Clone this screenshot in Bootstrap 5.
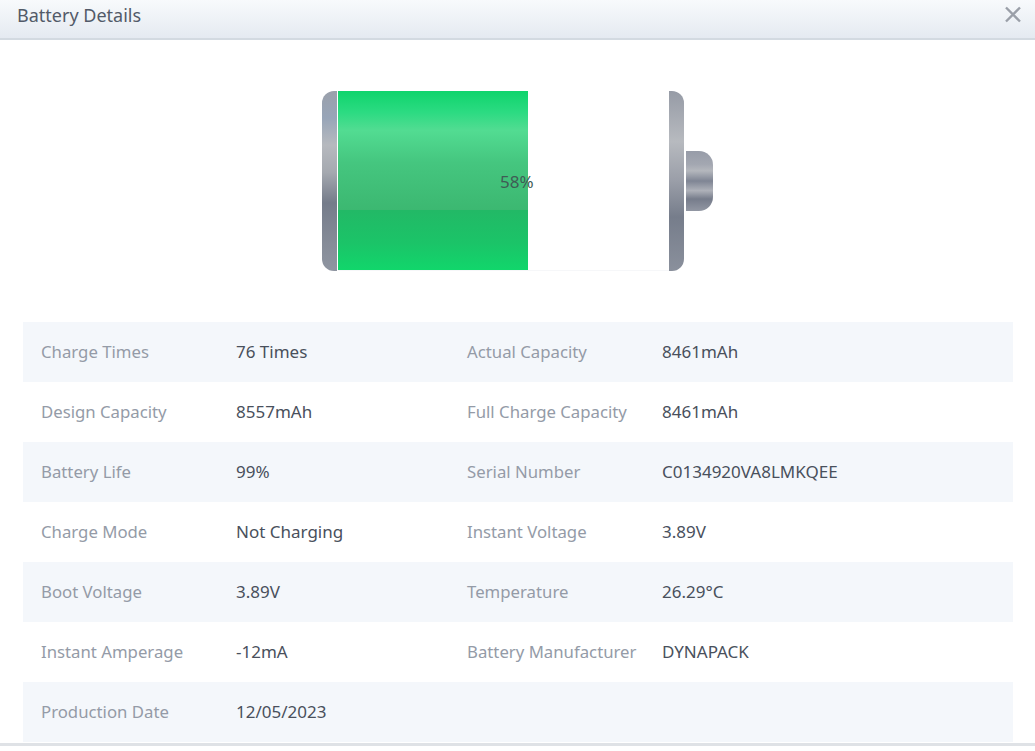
<!DOCTYPE html>
<html lang="en">
<head>
<meta charset="utf-8">
<title>Battery Details</title>
<link href="https://cdn.jsdelivr.net/npm/bootstrap@5.3.0/dist/css/bootstrap.min.css" rel="stylesheet">
<style>
html,body{height:751px;overflow:hidden;background:#fff}
body{font-family:"Noto Sans","Open Sans",sans-serif;font-size:17px;color:#4a5260}
.dlg-head{height:40px;padding:0 13px 8px 17px;background:linear-gradient(180deg,#f8fafc 0%,#e5eaf1 100%);border-bottom:2px solid #d3dae1}
.dlg-title{font-size:18px;color:#525a68;line-height:31px;margin:0;font-weight:400}
.dlg-x{width:18px;height:18px;display:block}
.batt-wrap{height:282px;padding-top:51px}
.batt{width:391px;height:180px;margin-left:322px}
.cap{width:15px;height:180px;flex:none}
.cap-l{border-radius:12px 0 0 12px;background:linear-gradient(180deg,#9aa0ab 0%,#98a5b8 15%,#b6b9be 30%,#a5a9b0 45%,#757c8a 62%,#868c98 85%,#8f95a1 100%)}
.cap-r{border-radius:0 12px 12px 0;background:linear-gradient(180deg,#969ba6 0%,#b7babf 28%,#9a9ea8 50%,#767d8b 70%,#8a909c 100%)}
.cell{width:331px;height:180px;flex:none;margin-left:1px;border:solid #f6f7f9;border-width:0 0 1px 0;position:relative;background:#fff}
.fill{height:179px;background:linear-gradient(180deg,#0fd46c 0%,#2cdb82 12%,#52dc92 22%,#45c67f 40%,#3cb871 66.400%,#22b966 66.600%,#1bc468 85%,#11d66b 100%)}
.pct{position:absolute;left:162px;top:79px;font-size:17px;line-height:24px;color:#3f5c55}
.nub{width:27px;height:60px;flex:none;margin-left:2px;align-self:center;border-radius:0 14px 14px 0;background:linear-gradient(180deg,#979ca8 0%,#a3a7b1 22%,#b4b7bd 33%,#7f8594 50%,#aeb1b9 66%,#767c8b 80%,#9297a3 100%)}
.info{margin:0 22px 0 23px}
.info-row{height:60px;align-items:baseline;padding-top:18px;line-height:24px}
.info-row:nth-child(odd){background:#f4f7fb}
.k1{width:213px;padding-left:18px;color:#949ba7;font-size:16.750px}
.v1{width:231px;color:#49505c}
.k2{width:195px;color:#949ba7;font-size:16.750px}
.v2{color:#49505c}
.foot{height:3px;margin-top:1px;background:#dfe2e6}
</style>
</head>
<body>
<header class="dlg-head d-flex justify-content-between align-items-center">
  <h1 class="dlg-title">Battery Details</h1>
  <svg class="dlg-x" viewBox="0 0 18 18" aria-label="Close"><path d="M2 1.500 16 15.500M16 1.500 2 15.500" stroke="#9a9fa8" stroke-width="2.400" fill="none"/></svg>
</header>
<main>
  <div class="batt-wrap">
    <div class="batt d-flex">
      <div class="cap cap-l"></div>
      <div class="cell"><div class="fill" style="width:57.400%"></div><span class="pct">58%</span></div>
      <div class="cap cap-r"></div>
      <div class="nub"></div>
    </div>
  </div>
  <div class="info">
    <div class="info-row d-flex"><div class="k1">Charge Times</div><div class="v1">76 Times</div><div class="k2">Actual Capacity</div><div class="v2">8461mAh</div></div>
    <div class="info-row d-flex"><div class="k1">Design Capacity</div><div class="v1">8557mAh</div><div class="k2">Full Charge Capacity</div><div class="v2">8461mAh</div></div>
    <div class="info-row d-flex"><div class="k1">Battery Life</div><div class="v1">99%</div><div class="k2">Serial Number</div><div class="v2">C0134920VA8LMKQEE</div></div>
    <div class="info-row d-flex"><div class="k1">Charge Mode</div><div class="v1">Not Charging</div><div class="k2">Instant Voltage</div><div class="v2">3.89V</div></div>
    <div class="info-row d-flex"><div class="k1">Boot Voltage</div><div class="v1">3.89V</div><div class="k2">Temperature</div><div class="v2">26.29°C</div></div>
    <div class="info-row d-flex"><div class="k1">Instant Amperage</div><div class="v1">-12mA</div><div class="k2">Battery Manufacturer</div><div class="v2">DYNAPACK</div></div>
    <div class="info-row d-flex"><div class="k1">Production Date</div><div class="v1">12/05/2023</div></div>
  </div>
  <div class="foot"></div>
</main>
<script src="https://cdn.jsdelivr.net/npm/bootstrap@5.3.0/dist/js/bootstrap.bundle.min.js"></script>
</body>
</html>
